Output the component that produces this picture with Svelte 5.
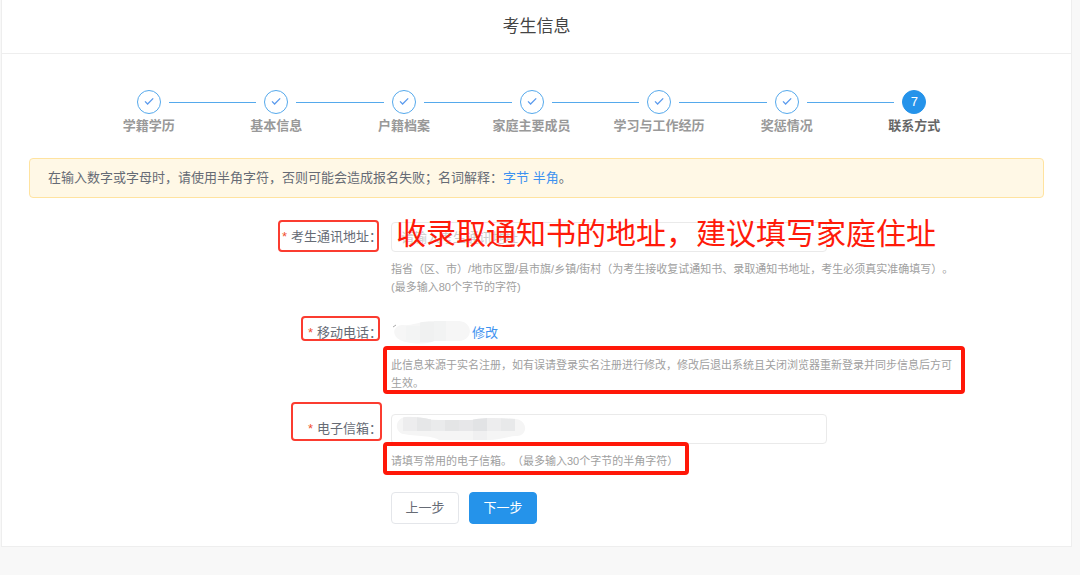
<script>
    const steps = ['学籍学历', '基本信息', '户籍档案', '家庭主要成员', '学习与工作经历', '奖惩情况', '联系方式']
    const current = 6
    let address = ''
</script>

<main class="panel">
    <h1 class="title">考生信息</h1>

    <div class="body">
        <ol class="steps">
            {#each steps as step, i}
                <li class="step" class:active={i === current}>
                    <div class="rail">
                        <span class="dot">
                            {#if i === current}
                                {i + 1}
                            {:else}
                                <svg width="10" height="10" viewBox="0 0 10 10" aria-hidden="true">
                                    <path d="M1 4.4 L3.6 7 L9.2 1.4"></path>
                                </svg>
                            {/if}
                        </span>
                    </div>
                    <span class="step-name">{step}</span>
                </li>
            {/each}
        </ol>

        <p class="notice">
            在输入数字或字母时，请使用半角字符，否则可能会造成报名失败；名词解释：<a href="#byte">字节</a> <a href="#half">半角</a>。
        </p>

        <form on:submit|preventDefault>
            <div class="row">
                <div class="name">
                    <i class="star">*</i><label for="address">考生通讯地址：</label>
                    <span class="frame frame-address"></span>
                </div>
                <div class="field">
                    <div class="control">
                        <input id="address" type="text" placeholder="请输入考生通讯地址" bind:value={address}>
                        <strong class="remark">收录取通知书的地址，建议填写家庭住址</strong>
                    </div>
                    <p class="hint">
                        指省（区、市）/地市区盟/县市旗/乡镇/街村（为考生接收复试通知书、录取通知书地址，考生必须真实准确填写）。<br>
                        (最多输入80个字节的字符)
                    </p>
                </div>
            </div>

            <div class="row">
                <div class="name">
                    <i class="star">*</i><span>移动电话：</span>
                    <span class="frame frame-phone"></span>
                </div>
                <div class="field">
                    <div class="control">
                        <svg width="81" height="26" viewBox="0 0 81 26" aria-hidden="true">
                            <path d="M2 7 L5 5" stroke="#aaa" fill="none"></path>
                            <clipPath id="phone-shape">
                                <path d="M11 5 C20 6 28 2 38 1 H68 C83 2 82 21 68 21 H43 C35 25 16 24 9 20 C0 15 2 6 11 5Z"></path>
                            </clipPath>
                            <g clip-path="url(#phone-shape)">
                                <rect width="80" height="26" fill="#f6f6f6"></rect>
                                <rect x="15" y="6" width="14" height="14" fill="#f3f4f4"></rect>
                                <rect x="29" y="2" width="14" height="20" fill="#f0f1f1"></rect>
                                <rect x="43" y="1" width="12" height="20" fill="#f2f3f3"></rect>
                            </g>
                        </svg>
                        <a href="#phone">修改</a>
                    </div>
                    <p class="hint">
                        此信息来源于实名注册，如有误请登录实名注册进行修改，修改后退出系统且关闭浏览器重新登录并同步信息后方可生效。
                        <span class="frame frame-hint"></span>
                    </p>
                </div>
            </div>

            <div class="row">
                <div class="name">
                    <i class="star">*</i><label for="email">电子信箱：</label>
                    <span class="frame frame-email"></span>
                </div>
                <div class="field">
                    <div class="control">
                        <input id="email" type="text">
                        <svg class="email-mask" width="132" height="26" viewBox="0 0 132 26" aria-hidden="true">
                            <clipPath id="email-shape">
                                <path d="M10 2 C24 1 34 5 44 5 H76 C90 2 105 3 121 4 C133 6 133 20 122 21 C112 21 108 25 90 25 H44 C40 21 20 21 8 19 C-1 16 0 4 10 2Z"></path>
                            </clipPath>
                            <g clip-path="url(#email-shape)">
                                <rect width="132" height="26" fill="#f5f5f5"></rect>
                                <rect x="8" y="2" width="14" height="14" fill="#ededee"></rect>
                                <rect x="22" y="2" width="14" height="14" fill="#e6e7e8"></rect>
                                <rect x="36" y="5" width="14" height="11" fill="#eaebec"></rect>
                                <rect x="50" y="5" width="14" height="11" fill="#e4e5e6"></rect>
                                <rect x="64" y="5" width="14" height="11" fill="#e7e7e9"></rect>
                                <rect x="78" y="3" width="14" height="13" fill="#e2e3e5"></rect>
                                <rect x="92" y="3" width="14" height="13" fill="#ededee"></rect>
                                <rect x="106" y="3" width="14" height="13" fill="#e8e9ea"></rect>
                                <rect x="78" y="16" width="14" height="10" fill="#f0f0f1"></rect>
                            </g>
                        </svg>
                    </div>
                    <p class="hint">
                        请填写常用的电子信箱。（最多输入30个字节的半角字符）
                        <span class="frame frame-hint frame-short"></span>
                    </p>
                </div>
            </div>

            <div class="row">
                <div class="field buttons">
                    <button type="button">上一步</button>
                    <button type="submit" class="primary">下一步</button>
                </div>
            </div>
        </form>
    </div>
</main>

<style>
    :global(body) {
        background: #f8f8f8;
        color: #666b75;
        font: 13px/20px "Liberation Sans", "Noto Sans CJK SC", sans-serif;
    }

    .panel {
        margin: 0 8px 28px 1px;
        background: #fff;
        border: 1px solid #eee;
        border-top: 0;
    }

    .title {
        margin: 0;
        padding: 13px 0;
        border-bottom: 1px solid #eee;
        color: #444;
        font-size: 17px;
        font-weight: 400;
        line-height: 27px;
        text-align: center;
    }

    .body {
        padding: 36px 27px 22px;
    }

    .steps {
        display: flex;
        margin: 0 66px 20px 56px;
        padding: 0;
        list-style: none;
    }

    .step {
        flex: 1 1 0;
        text-align: center;
    }

    .rail {
        display: flex;
        align-items: center;
        gap: 8px;
    }

    .rail::before,
    .rail::after {
        content: "";
        flex: 1;
        height: 1px;
        background: #55a9ec;
    }

    .step:first-child .rail::before,
    .step:last-child .rail::after {
        background: none;
    }

    .dot {
        display: flex;
        align-items: center;
        justify-content: center;
        box-sizing: border-box;
        width: 24px;
        height: 24px;
        border: 1px solid #55a9ec;
        border-radius: 50%;
    }

    .dot path {
        fill: none;
        stroke: #5b9bee;
        stroke-width: 1.3;
    }

    .active .dot {
        background: #2593ea;
        border-color: #2593ea;
        color: #fff;
    }

    .step-name {
        display: block;
        color: #999;
        font-weight: 700;
        line-height: 24px;
        white-space: nowrap;
    }

    .active .step-name {
        color: #666;
    }

    .notice {
        margin: 0 0 24px;
        padding: 9px 18px;
        background: #fff8e6;
        border: 1px solid #ffe3a0;
        border-radius: 4px;
    }

    a {
        color: #3d92f0;
        text-decoration: none;
    }

    form {
        display: flex;
        flex-direction: column;
        gap: 22px;
    }

    .row {
        display: grid;
        grid-template-columns: 362px 1fr;
        align-items: start;
    }

    .name {
        position: relative;
        justify-self: end;
        margin-right: 9px;
        line-height: 30px;
    }

    .star {
        margin-right: 4px;
        color: #f0502d;
        font-style: normal;
    }

    .field {
        grid-column: 2;
        max-width: 566px;
    }

    .control {
        position: relative;
        display: flex;
        align-items: center;
        height: 30px;
    }

    input {
        box-sizing: border-box;
        width: 100%;
        max-width: 436px;
        height: 30px;
        padding: 0 9px;
        border: 1px solid #eaeaea;
        border-radius: 4px;
        background: #fff;
        color: inherit;
        font: inherit;
    }

    input::placeholder {
        color: #ccc;
    }

    .hint {
        position: relative;
        margin: 8px 0 0;
        color: #a0a0a0;
        font-size: 11px;
        line-height: 18px;
        text-spacing-trim: space-all;
    }

    .buttons {
        display: flex;
        gap: 10px;
    }

    button {
        width: 68px;
        height: 32px;
        padding: 0;
        border: 1px solid #e4e6ea;
        border-radius: 4px;
        background: #fff;
        color: inherit;
        font: inherit;
    }

    .primary {
        border-color: #2593ea;
        background: #2593ea;
        color: #fff;
    }

    /* red marks drawn over the form */
    .remark {
        position: absolute;
        left: 5px;
        top: -8px;
        color: #ff1a0a;
        font-size: 30px;
        font-weight: 400;
        line-height: 40px;
        white-space: nowrap;
    }

    .frame {
        position: absolute;
        box-sizing: border-box;
        border: 2px solid #fb3c30;
        border-radius: 4px;
        pointer-events: none;
    }

    .frame-address {
        inset: -2px 3px 0 -4px;
    }

    .frame-phone {
        inset: -2px 2px 7px -7px;
    }

    .frame-email {
        inset: -12px 0 3px -17px;
    }

    .frame-hint {
        inset: -10px -8px -2px;
        border: 4px solid #ff1708;
    }

    .frame-short {
        right: auto;
        width: 306px;
        bottom: -5px;
    }

    .email-mask {
        position: absolute;
        left: 4px;
        top: 1px;
    }
</style>
